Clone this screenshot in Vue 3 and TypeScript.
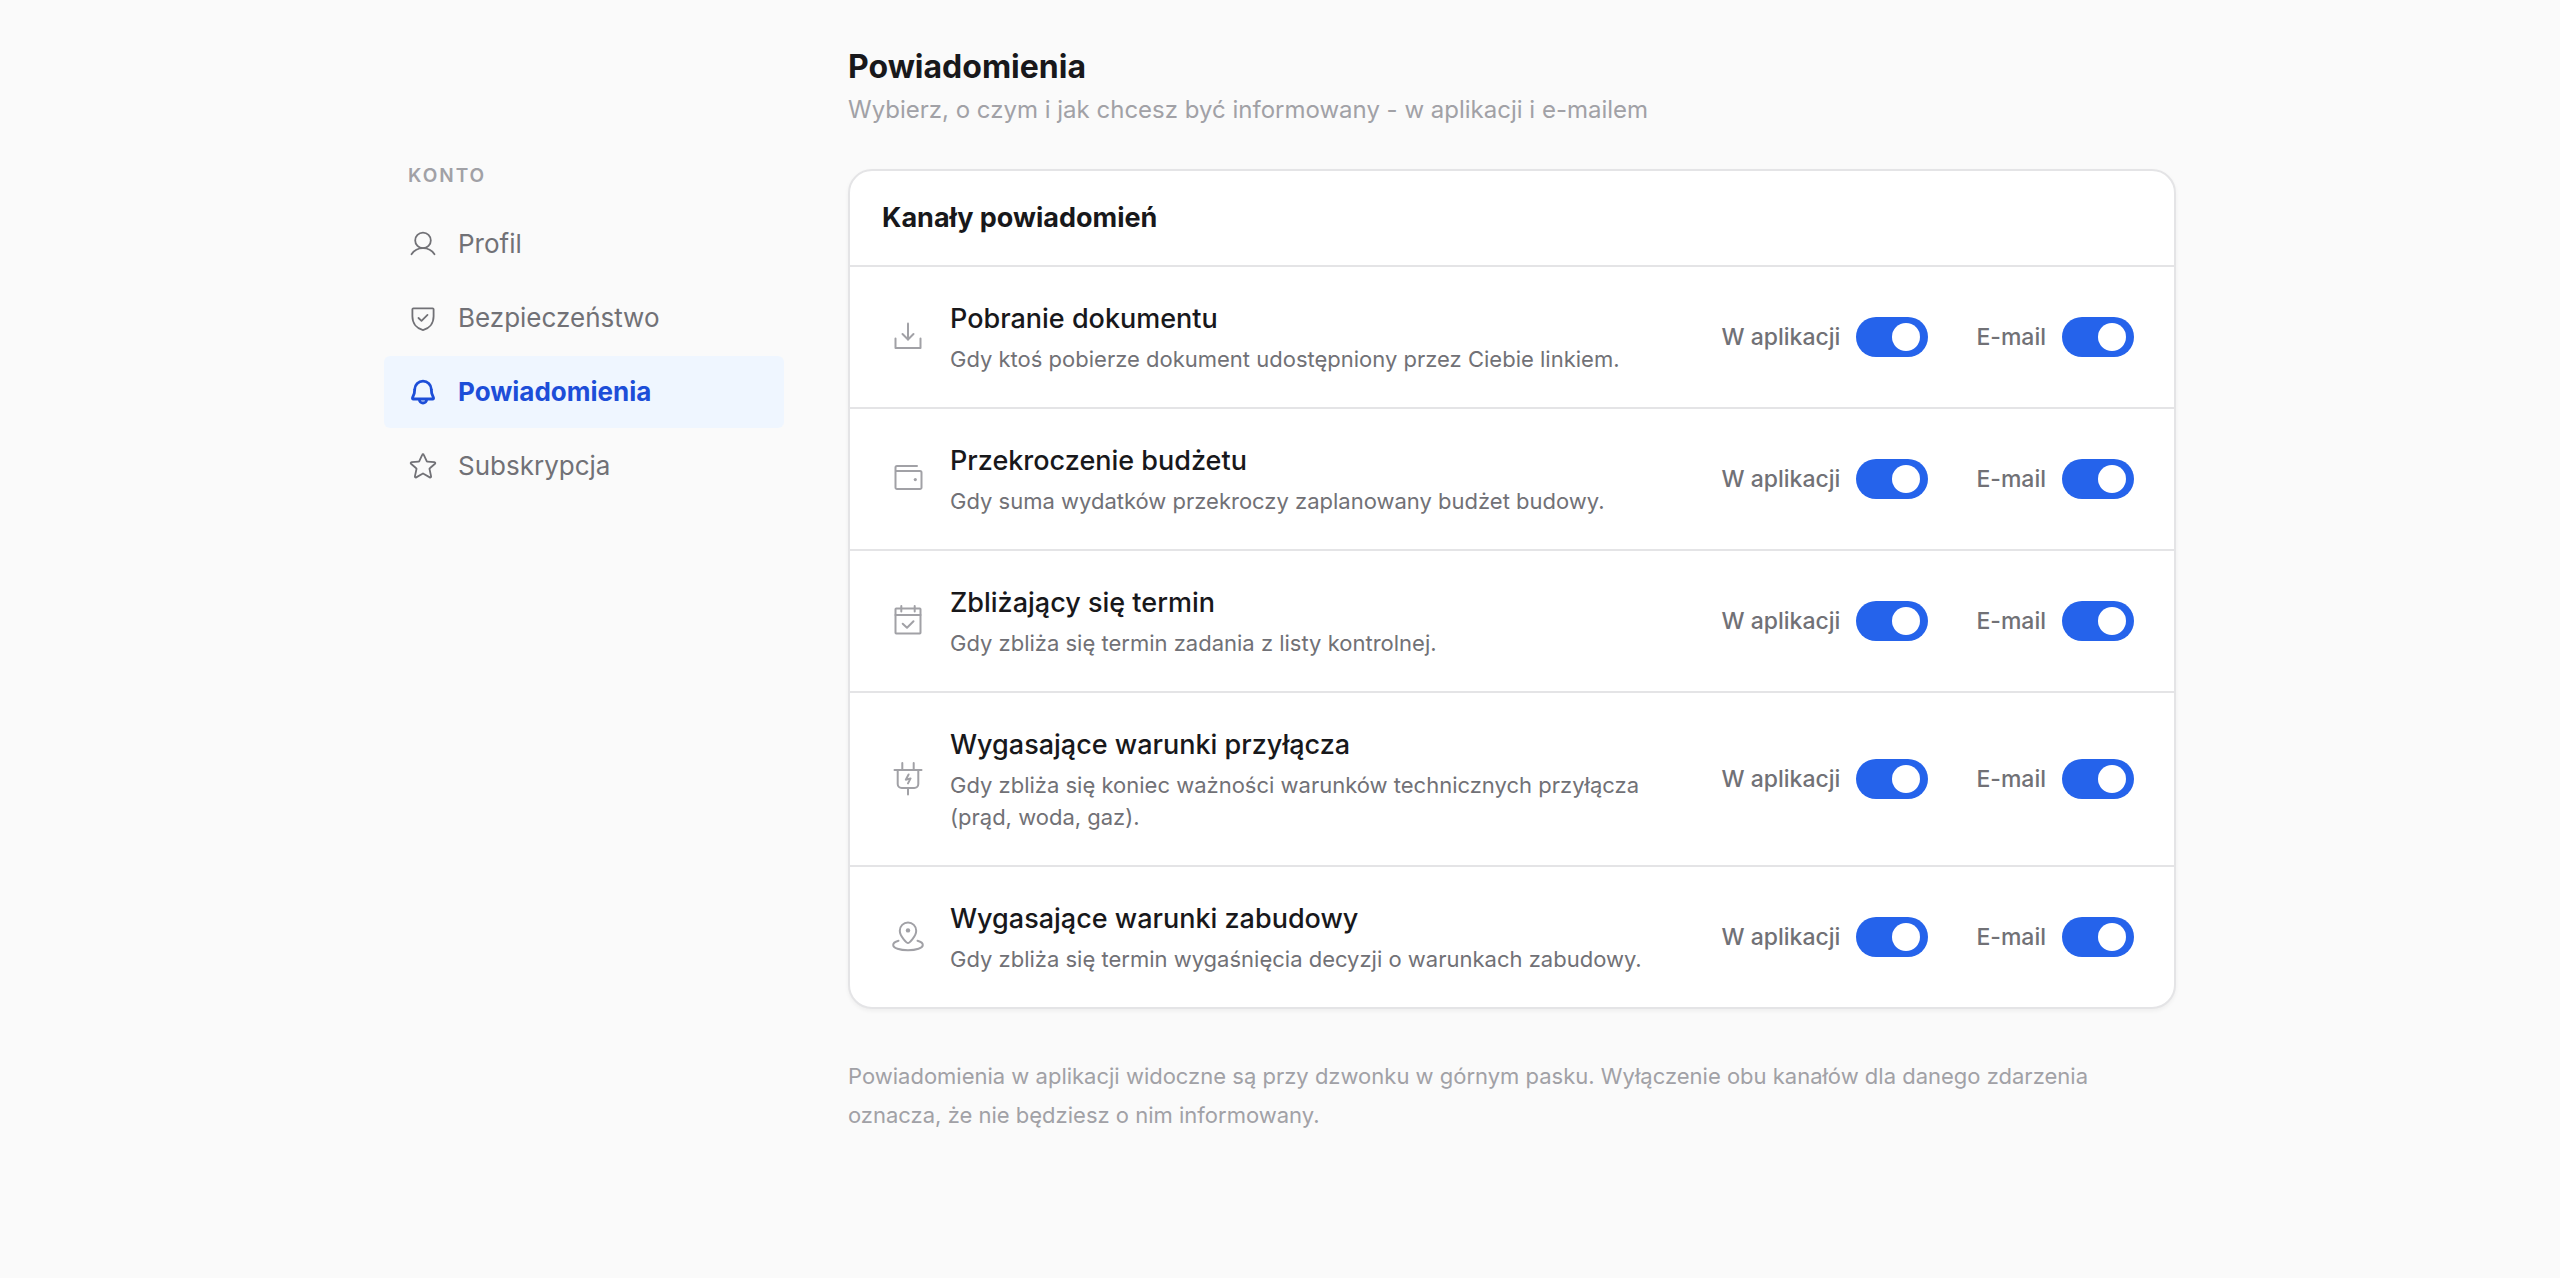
<script setup lang="ts">
import { ref } from 'vue'

interface NavItem {
  id: string
  label: string
  paths: string[]
}

interface NotificationRow {
  id: string
  title: string
  description: string
  paths: string[]
  dot?: { x: number; y: number; r: number }
  inApp: boolean
  email: boolean
}

const activeId = 'powiadomienia'

const navItems: NavItem[] = [
  {
    id: 'profil',
    label: 'Profil',
    paths: [
      'M15 3.6a7.8 7.8 0 1 1 0 15.6a7.8 7.8 0 1 1 0-15.6z',
      'M3.5 25.3C6 21.4 10 19.2 15 19.2s9 2.2 11.5 6.1',
    ],
  },
  {
    id: 'bezpieczenstwo',
    label: 'Bezpieczeństwo',
    paths: [
      'M5.4 5.3h19.2c.6 0 1 .4 1 1v6.9c0 7-4.2 12.2-10.6 13.9C8.6 25.4 4.4 20.2 4.4 13.2V6.3c0-.6.4-1 1-1z',
      'M10.5 15l3 2.9 6-6',
    ],
  },
  {
    id: 'powiadomienia',
    label: 'Powiadomienia',
    paths: [
      'M15 4.2c-4.6 0-8.1 3.4-8.3 8l-.4 4-1.8 4.6c-.2.7.1 1.2.8 1.2h19.4c.7 0 1-.5.8-1.2l-1.8-4.600-.4-4c-.2-4.600-3.700-8-8.300-8z',
      'M11.4 22.4a3.6 3.6 0 0 0 7.2 0',
    ],
  },
  {
    id: 'subskrypcja',
    label: 'Subskrypcja',
    paths: [
      'M14.2 3.8c.3-.8 1.3-.8 1.6 0l2.9 6.3c.1.3.4.5.7.5l7 .5c.9.1 1.2 1.1.6 1.7l-5.2 4.4c-.3.2-.4.5-.3.8l1.6 7.4c.2.9-.6 1.4-1.3 1l-6.3-3.7c-.3-.2-.7-.2-1 0l-6.3 3.7c-.7.4-1.500-.1-1.300-1L8.500 18c.1-.3 0-.6-.3-.8L3 12.8c-.6-.6-.3-1.6.6-1.700l7-.5c.3 0 .6-.2.7-.5z',
    ],
  },
]

const rows = ref<NotificationRow[]>([
  {
    id: 'dokument',
    title: 'Pobranie dokumentu',
    description: 'Gdy ktoś pobierze dokument udostępniony przez Ciebie linkiem.',
    paths: ['M5.5 19.5V29h25v-9.5', 'M18 4.5v16', 'M12.5 15l5.5 5.5 5.5-5.5'],
    inApp: true,
    email: true,
  },
  {
    id: 'budzet',
    title: 'Przekroczenie budżetu',
    description: 'Gdy suma wydatków przekroczy zaplanowany budżet budowy.',
    paths: ['M27 5H7a1.5 1.5 0 0 0-1.5 1.5v20A1.5 1.5 0 0 0 7 28h23a1.5 1.5 0 0 0 1.5-1.5v-15A1.5 1.5 0 0 0 30 10H6'],
    dot: { x: 25.3, y: 18.6, r: 1.6 },
    inApp: true,
    email: true,
  },
  {
    id: 'termin',
    title: 'Zbliżający się termin',
    description: 'Gdy zbliża się termin zadania z listy kontrolnej.',
    paths: [
      'M6.2 5.5h23.6q.7 0 .7.7v23.6q0 .7-.7.7H6.2q-.7 0-.7-.7V6.2q0-.7.7-.7z',
      'M5.5 12h25',
      'M11.3 3v5.5',
      'M24.7 3v5.5',
      'M12.7 20.8l4.3 4 6.5-6.6',
    ],
    inApp: true,
    email: true,
  },
  {
    id: 'przylacze',
    title: 'Wygasające warunki przyłącza',
    description: 'Gdy zbliża się koniec ważności warunków technicznych przyłącza (prąd, woda, gaz).',
    paths: [
      'M12.3 2v7',
      'M23.7 2v7',
      'M4.5 9h27',
      'M7.7 9v14a4 4 0 0 0 4 4h12.6a4 4 0 0 0 4-4V9',
      'M18 27v6.5',
      'M18.6 13.5l-2.8 5.2 4.8-1.3-2.6 5',
    ],
    inApp: true,
    email: true,
  },
  {
    id: 'zabudowa',
    title: 'Wygasające warunki zabudowy',
    description: 'Gdy zbliża się termin wygaśnięcia decyzji o warunkach zabudowy.',
    paths: [
      'M18 24c-1 0-8.2-6.5-8.2-12.3a8.2 8.2 0 0 1 16.4 0C26.2 17.5 19 24 18 24z',
      'M8.5 21.8C5 22.7 3.2 24.2 3.2 26c0 3 6.5 5.2 14.8 5.2s14.8-2.2 14.8-5.2c0-1.8-1.8-3.3-5.3-4.2',
    ],
    dot: { x: 18, y: 11.4, r: 2.2 },
    inApp: true,
    email: true,
  },
])
</script>

<template>
  <div class="page">
    <nav class="sidebar" aria-label="Konto">
      <h2 class="sidebar-title">KONTO</h2>
      <a
        v-for="item in navItems"
        :key="item.id"
        class="nav-link"
        :class="{ active: item.id === activeId }"
        :href="'#' + item.id"
        :aria-current="item.id === activeId ? 'page' : undefined"
      >
        <svg class="nav-icon" viewBox="0 0 30 30" aria-hidden="true">
          <path v-for="d in item.paths" :key="d" :d="d" />
        </svg>
        <span>{{ item.label }}</span>
      </a>
    </nav>

    <main class="content">
      <h1 class="page-title">Powiadomienia</h1>
      <p class="page-lead">Wybierz, o czym i jak chcesz być informowany - w aplikacji i e-mailem</p>

      <section class="card">
        <h2 class="card-title">Kanały powiadomień</h2>
        <ul class="rows">
          <li v-for="row in rows" :key="row.id" class="row">
            <svg class="row-icon" viewBox="0 0 36 36" aria-hidden="true">
              <path v-for="d in row.paths" :key="d" :d="d" />
              <circle v-if="row.dot" class="dot" :cx="row.dot.x" :cy="row.dot.y" :r="row.dot.r" />
            </svg>
            <div class="row-text">
              <h3 class="row-title">{{ row.title }}</h3>
              <p class="row-description">{{ row.description }}</p>
            </div>
            <div class="channels">
              <div class="channel">
                <label :for="row.id + '-app'">W aplikacji</label>
                <input :id="row.id + '-app'" v-model="row.inApp" class="switch" type="checkbox" role="switch" />
              </div>
              <div class="channel">
                <label :for="row.id + '-email'">E-mail</label>
                <input :id="row.id + '-email'" v-model="row.email" class="switch" type="checkbox" role="switch" />
              </div>
            </div>
          </li>
        </ul>
      </section>

      <p class="footnote">
        Powiadomienia w aplikacji widoczne są przy dzwonku w górnym pasku. Wyłączenie obu kanałów dla danego
        zdarzenia oznacza, że nie będziesz o nim informowany.
      </p>
    </main>
  </div>
</template>

<style>
body {
  margin: 0;
  background: #fafafa;
}
</style>

<style scoped>
.page {
  box-sizing: border-box;
  display: flex;
  align-items: flex-start;
  gap: 64px;
  max-width: 1856px;
  margin: 0 auto;
  padding: 44px 32px 96px;
  font-family: Inter, "Liberation Sans", sans-serif;
  color: #18181b;
}

h1,
h2,
h3,
p,
ul {
  margin: 0;
  padding: 0;
}

.sidebar {
  display: flex;
  flex-direction: column;
  gap: 2px;
  flex: 0 0 400px;
  padding-top: 116px;
}

.sidebar-title {
  padding: 0 24px 14px;
  font-size: 19px;
  font-weight: 600;
  line-height: 32px;
  letter-spacing: 2px;
  color: #a1a1a6;
}

.nav-link {
  display: flex;
  align-items: center;
  gap: 20px;
  height: 72px;
  padding: 0 24px;
  border-radius: 6px;
  font-size: 26px;
  line-height: 40px;
  color: #717176;
  text-decoration: none;
}

.nav-link.active {
  background: #eff6ff;
  color: #1d4ed8;
  font-weight: 700;
}

.nav-icon {
  width: 30px;
  height: 30px;
  flex: none;
  fill: none;
  stroke: currentColor;
  stroke-width: 1.8;
  stroke-linecap: round;
  stroke-linejoin: round;
}

.active .nav-icon {
  stroke-width: 2.8;
}

.content {
  flex: 1;
  min-width: 0;
}

.page-title {
  font-size: 32px;
  font-weight: 700;
  line-height: 46px;
}

.page-lead {
  padding-top: 2px;
  font-size: 24px;
  line-height: 36px;
  color: #a1a1a6;
}

.card {
  margin-top: 41px;
  border: 2px solid #e4e4e6;
  border-radius: 24px;
  background: #fff;
  box-shadow: 0 2px 4px rgb(0 0 0 / 5%);
}

.card-title {
  padding: 27px 32px;
  font-size: 27px;
  font-weight: 700;
  line-height: 40px;
}

.rows {
  list-style: none;
}

.row {
  display: flex;
  align-items: center;
  gap: 24px;
  padding: 32px 40px;
  border-top: 2px solid #e4e4e6;
}

.row-icon {
  width: 36px;
  height: 36px;
  flex: none;
  fill: none;
  stroke: #a1a1a6;
  stroke-width: 2;
  stroke-linecap: round;
  stroke-linejoin: round;
}

.dot {
  fill: #a1a1a6;
  stroke: none;
}

.row-text {
  flex: 1;
  min-width: 0;
}

.row-title {
  margin-bottom: 4px;
  font-size: 27px;
  font-weight: 500;
  line-height: 40px;
}

.row-description {
  font-size: 22px;
  line-height: 32px;
  color: #717176;
}

.channels {
  display: flex;
  gap: 48px;
  margin-left: 16px;
}

.channel {
  display: flex;
  align-items: center;
  gap: 16px;
  font-size: 23px;
  font-weight: 500;
  line-height: 40px;
  color: #717176;
  white-space: nowrap;
}

.switch {
  appearance: none;
  box-sizing: border-box;
  display: flex;
  align-items: center;
  width: 72px;
  height: 40px;
  margin: 0;
  padding: 0 8px;
  border-radius: 20px;
  background: #d4d4d8;
  cursor: pointer;
}

.switch::before {
  content: "";
  width: 28px;
  height: 28px;
  border-radius: 50%;
  background: #fff;
}

.switch:checked {
  justify-content: flex-end;
  background: #2563eb;
}

.footnote {
  margin-top: 48px;
  font-size: 22px;
  line-height: 39px;
  color: #a1a1a6;
}
</style>
